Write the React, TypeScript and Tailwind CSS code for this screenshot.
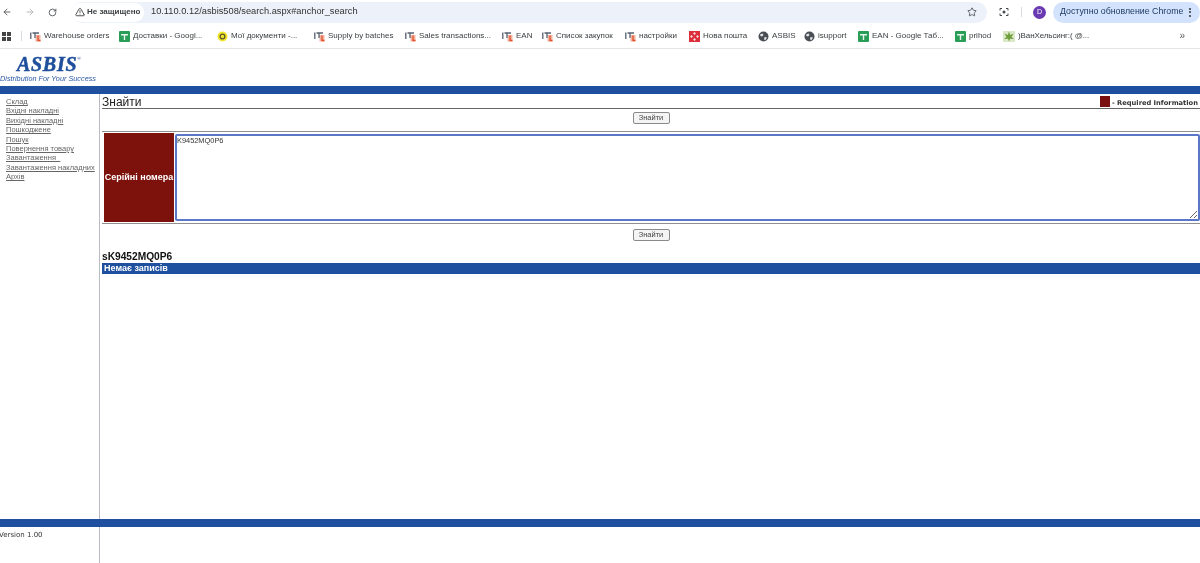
import React from "react";
import { ArrowLeft, ArrowRight, RotateCw, Star, TriangleAlert } from "lucide-react";

const sans = "font-['Liberation_Sans',Arial,sans-serif]";

function ItIcon() {
  return (
    <svg width="11" height="11" viewBox="0 0 11 11" className="shrink-0">
      <rect x="5.5" y="4" width="5" height="6.5" fill="#f4b3a0" />
      <path d="M0.8 1.5V8M2.5 2H9M5 2V7" stroke="#55606e" strokeWidth="1.3" fill="none" />
      <path d="M8 4.5V9.5H10.5" stroke="#e2512b" strokeWidth="1.3" fill="none" />
    </svg>
  );
}
function SheetIcon() {
  return (
    <svg width="11" height="11" viewBox="0 0 11 11" className="shrink-0">
      <rect width="11" height="11" rx="1" fill="#2a9d57" />
      <path d="M2 3H9V4.5H6.2V9H4.8V4.5H2Z" fill="#e8f5ec" />
    </svg>
  );
}
function NovaIcon() {
  return (
    <svg width="11" height="11" viewBox="0 0 11 11" className="shrink-0">
      <rect width="11" height="11" fill="#dc2f3a" />
      <path d="M5.5 1 7 2.5 5.5 4 4 2.5ZM5.5 7 7 8.5 5.5 10 4 8.5ZM2.5 4 4 5.5 2.5 7 1 5.5ZM8.5 4 10 5.5 8.5 7 7 5.5Z" fill="#f7d6d8" />
    </svg>
  );
}
function SmileIcon() {
  return (
    <svg width="11" height="11" viewBox="0 0 11 11" className="shrink-0">
      <circle cx="5.5" cy="5.5" r="5" fill="#f3e52c" />
      <circle cx="5.5" cy="5.5" r="2.4" fill="none" stroke="#5b5a2a" strokeWidth="1.3" />
    </svg>
  );
}
function LeafIcon() {
  return (
    <svg width="12" height="11" viewBox="0 0 12 11" className="shrink-0">
      <rect width="12" height="11" fill="#dbe8c8" />
      <path d="M6 0.5 7.2 4 10.5 2.5 8.5 6 11 8 7 7.8 6 10.5 5 7.8 1 8 3.5 6 1.5 2.5 4.8 4Z" fill="#6f9e3c" />
    </svg>
  );
}
function GlobeIcon() {
  return (
    <svg width="11" height="11" viewBox="0 0 11 11" className="shrink-0">
      <circle cx="5.5" cy="5.5" r="5" fill="#4a4f55" />
      <path d="M2 3.5 4.5 2.5 5.5 4 4 5.5 2.5 5ZM6.5 6 9 6.5 7.5 9 6 8.5Z" fill="#e6e8ea" />
    </svg>
  );
}

const bookmarks: { icon: React.ReactNode; label: string; w: string }[] = [
  { icon: <ItIcon />, label: "Warehouse orders", w: "w-[89px]" },
  { icon: <SheetIcon />, label: "Доставки - Googl...", w: "w-[98px]" },
  { icon: <SmileIcon />, label: "Мої документи -...", w: "w-[97px]" },
  { icon: <ItIcon />, label: "Supply by batches", w: "w-[91px]" },
  { icon: <ItIcon />, label: "Sales transactions...", w: "w-[97px]" },
  { icon: <ItIcon />, label: "EAN", w: "w-[40px]" },
  { icon: <ItIcon />, label: "Список закупок", w: "w-[83px]" },
  { icon: <ItIcon />, label: "настройки", w: "w-[64px]" },
  { icon: <NovaIcon />, label: "Нова пошта", w: "w-[69px]" },
  { icon: <GlobeIcon />, label: "ASBIS", w: "w-[46px]" },
  { icon: <GlobeIcon />, label: "isupport", w: "w-[54px]" },
  { icon: <SheetIcon />, label: "EAN - Google Таб...", w: "w-[97px]" },
  { icon: <SheetIcon />, label: "prihod", w: "w-[48px]" },
  { icon: <LeafIcon />, label: ")ВанХельсинг:( @...", w: "w-[100px] tracking-[-0.1px]" },
];

const navLinks = [
  "Склад",
  "Вхідні накладні",
  "Вихідні накладні",
  "Пошкоджене",
  "Пошук",
  "Повернення товару",
  "Завантаження_",
  "Завантаження накладних",
  "Архів",
];

function FindButton() {
  return (
    <button className="h-[12px] w-[37px] rounded-[2px] border border-[#8a8a8a] bg-[#f4f4f4] text-[7.5px] leading-none text-[#444]">
      Знайти
    </button>
  );
}

export default function App() {
  return (
    <div className={`flex h-[563px] w-[1200px] flex-col overflow-hidden bg-white ${sans} blur-[0.45px]`}>
      {/* browser toolbar */}
      <div className="flex h-[24px] shrink-0 items-center pl-[1px] text-[#474a4f]">
        <ArrowLeft size={10} strokeWidth={2} className="ml-px" />
        <ArrowRight size={10} strokeWidth={2} className="ml-[13px] text-[#a8abb0]" />
        <RotateCw size={9} strokeWidth={2.2} className="ml-[13px]" />
        <div className="ml-[14px] flex h-[21px] w-[916px] items-center rounded-full bg-[#edf2fa]">
          <div className="flex h-[19px] w-[73px] items-center rounded-full bg-white pl-[4px]">
            <TriangleAlert size={10} strokeWidth={2} className="text-[#333]" />
            <span className="ml-[2px] text-[8px] font-bold whitespace-nowrap text-[#3c4043]">Не защищено</span>
          </div>
          <span className="ml-[7px] text-[9.25px] whitespace-nowrap text-[#333]">10.110.0.12/asbis508/search.aspx#anchor_search</span>
          <Star size={10} strokeWidth={2} className="ml-auto mr-[10px]" />
        </div>
        <svg width="10" height="10" viewBox="0 0 10 10" className="ml-[12px] shrink-0">
          <path d="M1 3.5V1.5H3M7 1.5H9V3.5M9 6.5V8.5H7M3 8.5H1V6.5" stroke="#474a4f" strokeWidth="1" fill="none" />
          <circle cx="5" cy="5" r="1.5" fill="#474a4f" />
        </svg>
        <div className="ml-[12px] h-[10px] w-px bg-[#d8dbe0]" />
        <div className="ml-[11px] flex h-[13px] w-[13px] items-center justify-center rounded-full bg-[#6a3ab2] text-[7px] text-white">D</div>
        <div className="ml-[7px] flex h-[21px] w-[147px] items-center rounded-full bg-[#d3e3fd] pl-[7px] text-[8.8px] whitespace-nowrap text-[#1f3a63]">
          Доступно обновление Chrome
          <span className="ml-[6px] flex flex-col gap-[1.5px]">
            <i className="h-[2px] w-[2px] rounded-full bg-[#333]" />
            <i className="h-[2px] w-[2px] rounded-full bg-[#333]" />
            <i className="h-[2px] w-[2px] rounded-full bg-[#333]" />
          </span>
        </div>
      </div>

      {/* bookmarks */}
      <div className="flex h-[25px] shrink-0 items-center border-b border-[#e4e6ea] text-[8px] text-[#3c4043]">
        <div className="ml-[2px] grid h-[9px] w-[9px] grid-cols-2 gap-[1px]">
          <i className="bg-[#444]" />
          <i className="bg-[#444]" />
          <i className="bg-[#444]" />
          <i className="bg-[#444]" />
        </div>
        <div className="ml-[10px] h-[10px] w-px bg-[#d8dbe0]" />
        <div className="ml-[8px] flex items-center">
          {bookmarks.map((b) => (
            <div key={b.label} className={`flex items-center gap-[3px] whitespace-nowrap ${b.w}`}>
              {b.icon}
              <span>{b.label}</span>
            </div>
          ))}
        </div>
        <span className="ml-auto mr-[15px] text-[10px] leading-none text-[#555]">»</span>
      </div>

      {/* logo */}
      <div className="flex h-[37px] shrink-0 flex-col pt-[6px]">
        <div className="ml-[17px] flex h-[18px] items-start font-['Liberation_Serif',serif] text-[20px] leading-[18px] font-bold tracking-[0.7px] text-[#1f4f9c] italic [-webkit-text-stroke:0.5px_#1f4f9c]">
          ASBIS<span className="text-[5px] leading-[8px] [-webkit-text-stroke:0]">®</span>
        </div>
        <div className="mt-[2px] text-[7.3px] leading-[8px] whitespace-nowrap text-[#2b5aa6] italic">Distribution For Your Success</div>
      </div>

      <div className="h-[8px] shrink-0 bg-[#1f4f9f]" />

      {/* body */}
      <div className="flex min-h-0 flex-1">
        <nav className="flex w-[100px] shrink-0 flex-col items-start border-r border-r-[#b9bcc2] pt-[3px] pl-[6px]">
          {navLinks.map((l) => (
            <a key={l} className="h-[9.4px] text-[7.5px] leading-[9.4px] whitespace-nowrap text-[#666] underline">
              {l}
            </a>
          ))}
        </nav>
        <main className="min-w-0 flex-1 pl-[2px]">
          <div className="flex h-[15px] items-end justify-between overflow-hidden border-b border-[#666]">
            <span className="text-[12px] leading-[12px] text-[#222]">Знайти</span>
            <span className="flex w-[100px] shrink-0 items-center gap-[2px] font-['DejaVu_Sans',sans-serif] text-[6.7px] font-bold whitespace-nowrap text-[#333]">
              <i className="h-[11px] w-[10px] shrink-0 bg-[#7b1010]" />
              <span className="pt-[2px]">- Required Information</span>
            </span>
          </div>
          <div className="flex h-[22px] items-center justify-center pb-[5px]">
            <FindButton />
          </div>
          <div className="flex h-[93px] border-y border-[#8f8f8f] py-px pl-[2px]">
            <div className="flex w-[70px] items-center justify-center bg-[#7d120d] text-[9px] font-bold whitespace-nowrap text-white">
              Серійні номера
            </div>
            <div className="flex min-w-0 flex-1 items-center pl-px">
              <textarea
                readOnly
                value="K9452MQ0P6"
                className="h-[87px] w-full resize-y rounded-[2px] border-2 border-[#5b78c8] bg-white px-0 pt-px text-[7.4px] leading-[8px] text-[#333] outline-none"
              />
            </div>
          </div>
          <div className="flex h-[24px] items-center justify-center pb-[2px]">
            <FindButton />
          </div>
          <div className="mt-[3px] h-[12px] text-[10.2px] leading-[12px] font-bold text-[#111]">sK9452MQ0P6</div>
          <div className="h-[11px] bg-[#1f4f9f] pl-[2px] text-[9px] leading-[11px] font-bold text-white">Немає записів</div>
        </main>
      </div>

      <div className="h-[8px] shrink-0 bg-[#1f4f9f]" />

      {/* footer */}
      <div className="flex h-[36px] shrink-0">
        <div className="w-[100px] border-r border-r-[#b9bcc2] pt-[4px]">
          <span className="-ml-[1px] block font-['DejaVu_Sans',sans-serif] text-[7px] leading-[8px] text-[#333]">Version 1.00</span>
        </div>
      </div>
    </div>
  );
}
